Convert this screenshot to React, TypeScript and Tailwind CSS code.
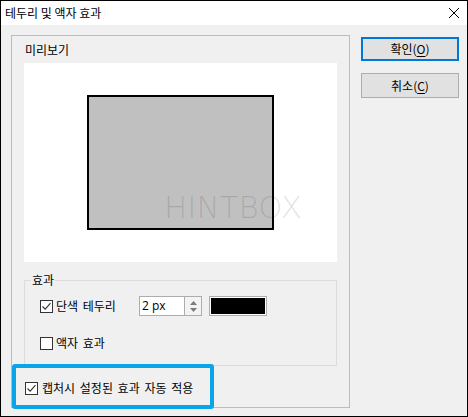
import React from "react";

const font = { fontFamily: '"Noto Sans CJK KR", "Noto Sans", sans-serif' };

function Check({ checked }: { checked: boolean }) {
  return (
    <span className="flex h-[13px] w-[13px] shrink-0 items-center justify-center border border-[#333333] bg-white">
      {checked && (
        <svg width="11" height="11" viewBox="0 0 11 11">
          <path d="M1.5 5.5 L4.2 8.2 L9.5 2.2" fill="none" stroke="#333333" strokeWidth="1.1" />
        </svg>
      )}
    </span>
  );
}

export default function App() {
  return (
    <div
      className="relative flex h-[417px] w-[468px] flex-col overflow-hidden border border-black bg-[#f0f0f0] text-[12px] text-black"
      style={font}
    >
      {/* Title bar */}
      <div className="flex h-[24px] shrink-0 items-center justify-between bg-white pl-[4px] pr-[6px]">
        <span className="leading-[16px]">테두리 및 액자 효과</span>
        <svg width="12" height="12" viewBox="0 0 12 12" className="mr-[1px]">
          <path d="M1 1 L11 11 M11 1 L1 11" stroke="#000" strokeWidth="1" />
        </svg>
      </div>

      {/* Body */}
      <div className="flex flex-1">
        {/* Main group */}
        <div className="ml-[10px] mt-[10px] flex h-[373px] w-[339px] flex-col border border-[#bcbcbc] pl-[12px]">
          <div className="mt-[6px] h-[16px] pl-[1px] leading-[16px]">미리보기</div>
          <div className="relative mt-[5px] h-[199px] w-[313px] bg-white pl-[63px] pt-[32px]">
            <div className="h-[135px] w-[187px] border-2 border-black bg-[#c0c0c0]" />
            <span
              className="absolute left-[140px] top-[124px] text-[31px] font-extralight leading-[40px] text-[rgba(0,0,0,0.12)]"
              style={{ fontFamily: '"DejaVu Sans", sans-serif' }}
            >
              HINTBOX
            </span>
          </div>

          {/* 효과 group */}
          <fieldset className="mt-[11px] h-[93px] w-[313px] border border-[#dcdcdc]">
            <legend className="ml-[6px] px-[1px] leading-[14px]">효과</legend>
            <div className="pl-[15px]">
              <div className="mt-[9px] flex h-[20px] items-center">
                <Check checked={true} />
                <span className="ml-[3px] w-[83px] leading-[16px] [word-spacing:2px]">단색 테두리</span>
                <div className="flex h-[20px] w-[63px] border border-[#adadad] bg-white">
                  <span
                    className="flex-1 pl-[2px] leading-[18px]"
                    style={{ fontFamily: '"Open Sans", "Noto Sans", sans-serif' }}
                  >
                    2 px
                  </span>
                  <div className="flex w-[17px] flex-col items-center justify-center gap-[3px] border-l border-[#adadad] bg-[#f3f3f3]">
                    <svg width="7" height="4" viewBox="0 0 7 4">
                      <path d="M0 4 L3.5 0 L7 4 Z" fill="#7a7a7a" />
                    </svg>
                    <svg width="7" height="4" viewBox="0 0 7 4">
                      <path d="M0 0 L7 0 L3.5 4 Z" fill="#7a7a7a" />
                    </svg>
                  </div>
                </div>
                <div className="ml-[7px] h-[20px] w-[58px] border border-[#adadad] bg-white p-[1px]">
                  <div className="h-full w-full bg-black" />
                </div>
              </div>
              <div className="mt-[19px] flex h-[16px] items-center">
                <Check checked={false} />
                <span className="ml-[3px] leading-[16px] [word-spacing:2px]">액자 효과</span>
              </div>
            </div>
          </fieldset>

          <div className="ml-[1px] mt-[14px] flex h-[16px] items-center">
            <Check checked={true} />
            <span className="ml-[4px] leading-[16px] [word-spacing:2px]">캡처시 설정된 효과 자동 적용</span>
          </div>
        </div>

        {/* Buttons */}
        <div className="ml-[11px] mt-[12px] flex flex-col">
          <button className="flex h-[24px] w-[98px] items-center justify-center border-2 border-[#0078d7] bg-[#e1e1e1] leading-[16px]">
            확인(<span className="underline underline-offset-2">O</span>)
          </button>
          <button className="mt-[12px] flex h-[25px] w-[98px] items-center justify-center border border-[#adadad] bg-[#e1e1e1] leading-[16px]">
            취소(<span className="underline underline-offset-2">C</span>)
          </button>
        </div>
      </div>

      {/* Highlight annotation */}
      <div className="absolute left-[11px] top-[363px] h-[45px] w-[202px] rounded-[3px] border-4 border-[#0aa4e8]" />
    </div>
  );
}
